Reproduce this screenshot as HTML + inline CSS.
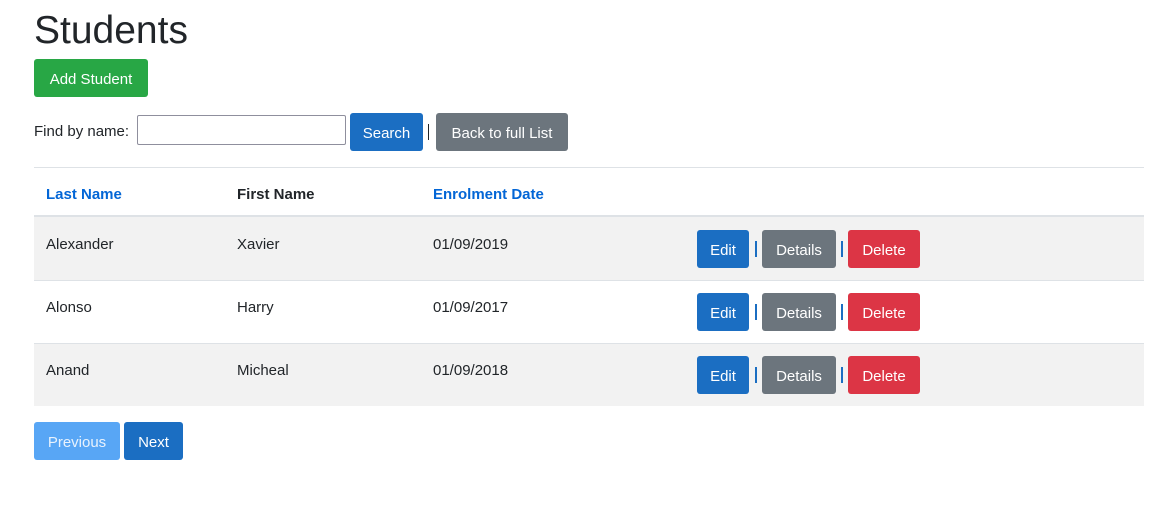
<!DOCTYPE html><html><head><style>
body{margin:0;font-family:"Liberation Sans",sans-serif;color:#212529;font-size:15px;background:#fff;width:1164px;height:513px;overflow:hidden;position:relative}
.a{position:absolute}
.b{position:absolute;color:#fff;border-radius:3px;display:flex;align-items:center;justify-content:center;font-size:15px;box-sizing:border-box;padding-top:3px}
.g{background:#28a745}.p{background:#1b6ec2}.s{background:#6c757d}.r{background:#dc3545}
.pipe{position:absolute;width:2px;height:16px;background:#1b6ec2}
.row{position:absolute;left:34px;width:1110px;height:62px;border-top:1px solid #dee2e6}
</style></head><body>
<div class="a" style="left:34px;top:9px;font-size:39px;">Students</div>
<div class="b g" style="left:34px;top:59px;width:114px;height:38px">Add Student</div>
<div class="a" style="left:34px;top:123px">Find by name:</div>
<div class="a" style="left:137px;top:115px;width:207px;height:28px;border:1px solid #8f8f9d;border-radius:2px"></div>
<div class="b p" style="left:350px;top:113px;width:73px;height:38px">Search</div>
<div class="a" style="left:428px;top:124px;width:1px;height:16px;background:#212529"></div>
<div class="b s" style="left:436px;top:113px;width:132px;height:38px">Back to full List</div>
<div class="a" style="left:34px;top:167px;width:1110px;height:1px;background:#dee2e6"></div>
<div class="a" style="left:46px;top:186px;font-weight:bold;color:#0366d6">Last Name</div>
<div class="a" style="left:237px;top:186px;font-weight:bold">First Name</div>
<div class="a" style="left:433px;top:186px;font-weight:bold;color:#0366d6">Enrolment Date</div>
<div class="a" style="left:34px;top:215px;width:1110px;height:2px;background:#dee2e6"></div>
<div class="row" style="top:217px;background:#f2f2f2;border-top:none;height:63px"></div>
<div class="row" style="top:280px"></div>
<div class="row" style="top:343px;background:#f2f2f2"></div>
<div class="a" style="left:46px;top:236px">Alexander</div><div class="a" style="left:237px;top:236px">Xavier</div><div class="a" style="left:433px;top:236px">01/09/2019</div>
<div class="a" style="left:46px;top:299px">Alonso</div><div class="a" style="left:237px;top:299px">Harry</div><div class="a" style="left:433px;top:299px">01/09/2017</div>
<div class="a" style="left:46px;top:362px">Anand</div><div class="a" style="left:237px;top:362px">Micheal</div><div class="a" style="left:433px;top:362px">01/09/2018</div>
<div class="b p" style="left:697px;top:230px;width:52px;height:38px">Edit</div><div class="pipe" style="left:755px;top:241px"></div><div class="b s" style="left:762px;top:230px;width:74px;height:38px">Details</div><div class="pipe" style="left:841px;top:241px"></div><div class="b r" style="left:848px;top:230px;width:72px;height:38px">Delete</div>
<div class="b p" style="left:697px;top:293px;width:52px;height:38px">Edit</div><div class="pipe" style="left:755px;top:304px"></div><div class="b s" style="left:762px;top:293px;width:74px;height:38px">Details</div><div class="pipe" style="left:841px;top:304px"></div><div class="b r" style="left:848px;top:293px;width:72px;height:38px">Delete</div>
<div class="b p" style="left:697px;top:356px;width:52px;height:38px">Edit</div><div class="pipe" style="left:755px;top:367px"></div><div class="b s" style="left:762px;top:356px;width:74px;height:38px">Details</div><div class="pipe" style="left:841px;top:367px"></div><div class="b r" style="left:848px;top:356px;width:72px;height:38px">Delete</div>
<div class="b" style="left:34px;top:422px;width:86px;height:38px;background:#58a6f5;color:#e8f2fd">Previous</div>
<div class="b p" style="left:124px;top:422px;width:59px;height:38px">Next</div>
</body></html>
